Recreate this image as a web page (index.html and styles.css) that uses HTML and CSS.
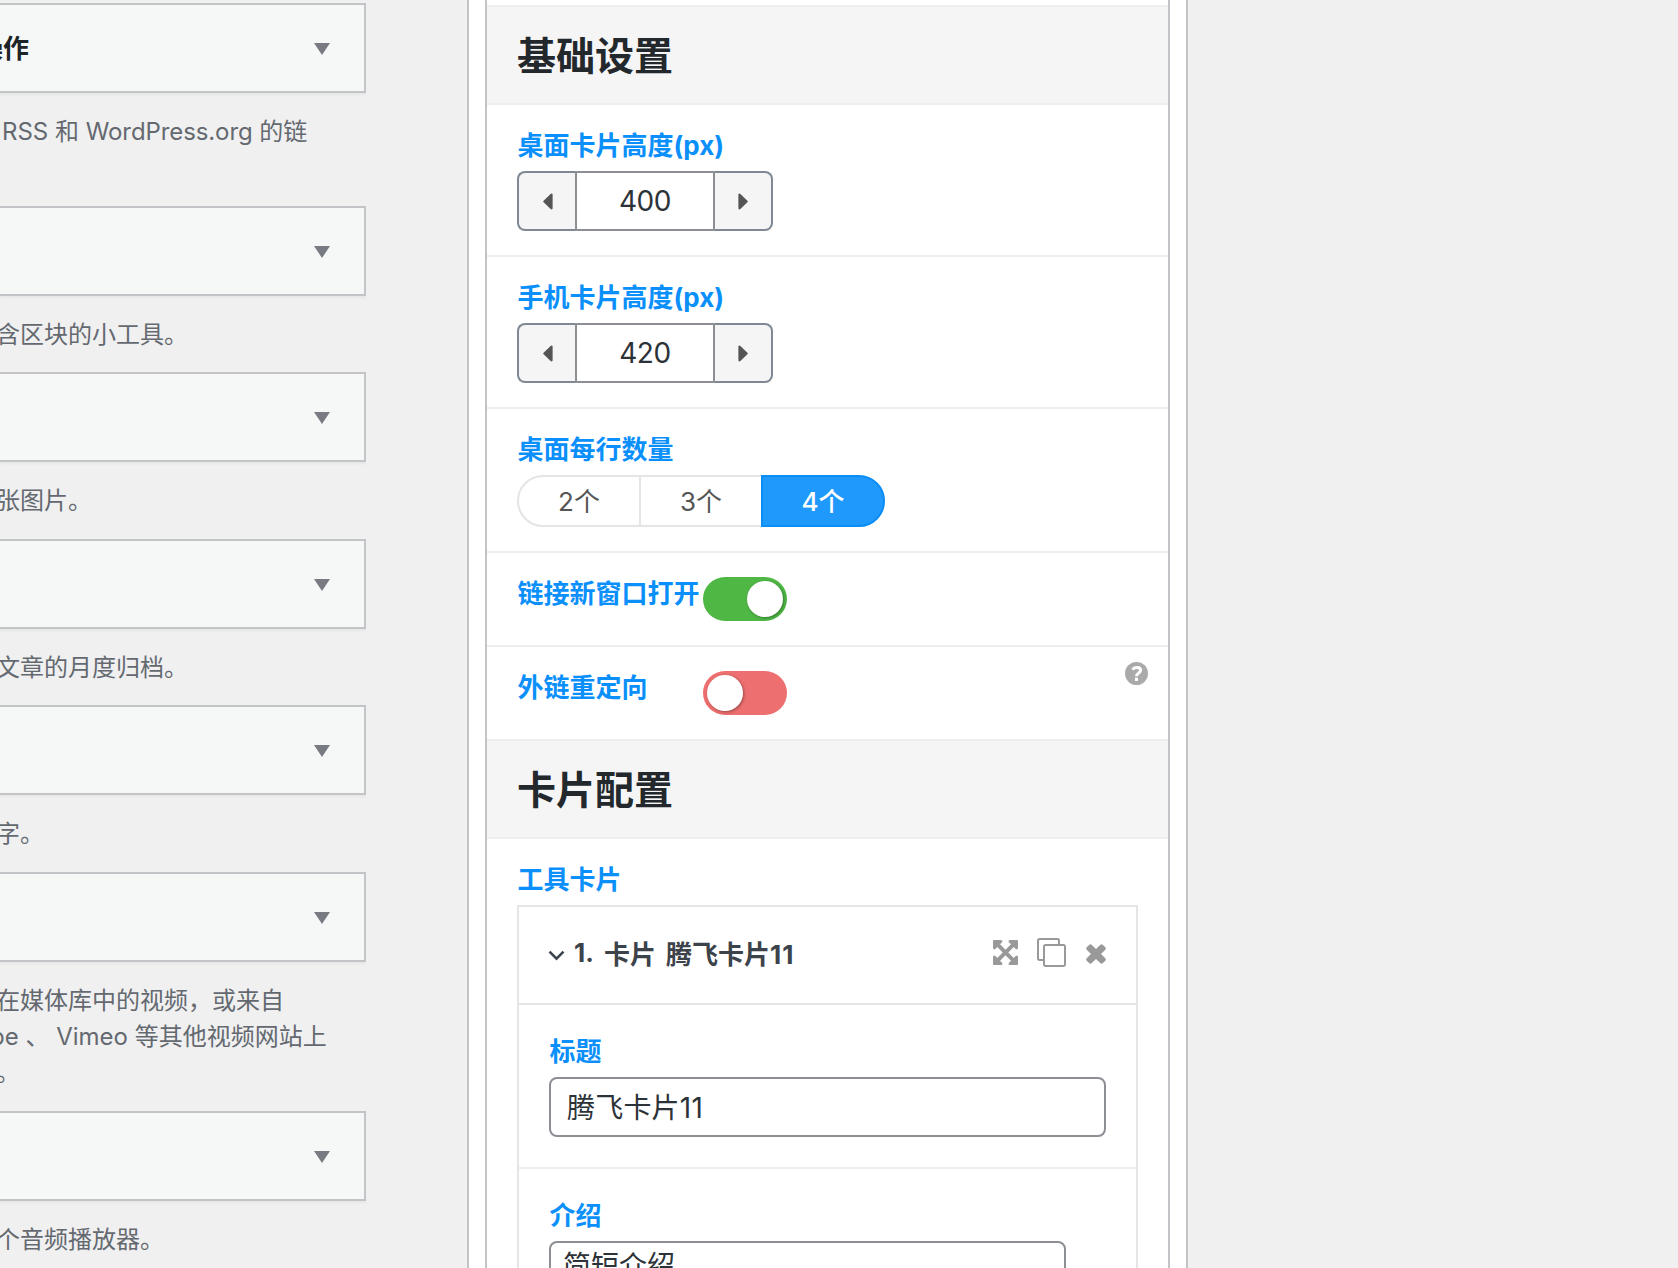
FILE: index.html
```html
<!DOCTYPE html>
<html lang="zh-CN">
<head>
  <meta charset="utf-8">
  <title>小工具</title>
  <link rel="stylesheet" href="styles.css">
</head>
<body>

<!-- available widgets -->
<div class="widgets">
  <div class="widget"><h3>操作</h3><i class="arrow"></i></div>
  <p class="desc rss">RSS 和 <span>WordPress.org</span> 的链<br>&nbsp;</p>
  <div class="widget"><i class="arrow"></i></div>
  <p class="desc">含区块的小工具。</p>
  <div class="widget"><i class="arrow"></i></div>
  <p class="desc">张图片。</p>
  <div class="widget"><i class="arrow"></i></div>
  <p class="desc">文章的月度归档。</p>
  <div class="widget"><i class="arrow"></i></div>
  <p class="desc">字。</p>
  <div class="widget"><i class="arrow"></i></div>
  <p class="desc">在媒体库中的视频，或来自<br><span class="tube">be 、 Vimeo 等其他视频网站上</span><br>。</p>
  <div class="widget"><i class="arrow"></i></div>
  <p class="desc">个音频播放器。</p>
</div>

<!-- settings of the opened widget -->
<div class="panel">
  <div class="fields">
    <h2 class="heading">基础设置</h2>

    <div class="field">
      <label>桌面卡片高度(px)</label>
      <div class="spinner">
        <button><svg width="10" height="17" viewBox="0 0 10 17"><path d="M9.6 1.6v13.8q-.6 1.6-2 .6L.6 9.3q-.8-.8 0-1.6L7.6 1q1.4-1 2 .6z"/></svg></button>
        <input type="text" value="400">
        <button><svg width="10" height="17" viewBox="0 0 10 17"><path d="M.4 1.6v13.8q.6 1.6 2 .6L9.4 9.3q.8-.8 0-1.6L2.4 1Q1 0 .4 1.6z"/></svg></button>
      </div>
    </div>

    <div class="field">
      <label>手机卡片高度(px)</label>
      <div class="spinner">
        <button><svg width="10" height="17" viewBox="0 0 10 17"><path d="M9.6 1.6v13.8q-.6 1.6-2 .6L.6 9.3q-.8-.8 0-1.6L7.6 1q1.4-1 2 .6z"/></svg></button>
        <input type="text" value="420">
        <button><svg width="10" height="17" viewBox="0 0 10 17"><path d="M.4 1.6v13.8q.6 1.6 2 .6L9.4 9.3q.8-.8 0-1.6L2.4 1Q1 0 .4 1.6z"/></svg></button>
      </div>
    </div>

    <div class="field">
      <label>桌面每行数量</label>
      <div class="buttons">
        <span>2个</span><span>3个</span><span class="active">4个</span>
      </div>
    </div>

    <div class="field inline">
      <label>链接新窗口打开</label>
      <div class="switch on"><i></i></div>
    </div>

    <div class="field inline">
      <label>外链重定向</label>
      <div class="switch"><i></i></div>
      <svg class="help" width="23" height="23" viewBox="0 0 69 69"><circle cx="34.5" cy="34.5" r="34.5" fill="#aaa"/><path d="M23 23C28 14 47 14 47 25C47 33 34.5 33 34.5 43" fill="none" stroke="#fff" stroke-width="9"/><path d="M30 47h9v10h-9z" fill="#fff"/></svg>
    </div>

    <h2 class="heading">卡片配置</h2>

    <div class="field">
      <label>工具卡片</label>
      <div class="group">
        <div class="group-title">
          <svg class="chevron" width="17" height="11" viewBox="0 0 17 11"><path d="M1.5 1.7l7 7 7-7" fill="none" stroke="#3c434a" stroke-width="2.6"/></svg>
          <span class="no">1.</span><span class="type">卡片</span><span class="name">腾飞卡片<b>11</b></span>
          <div class="tools">
            <svg width="25" height="25" viewBox="0 0 75 75" fill="#999"><path d="M14 14l47 47M61 14l-47 47" stroke="#999" stroke-width="12"/><path id="corner" d="M3 0H24q7 2 3 7L7 27q-5 4-7-3V3q0-3 3-3z"/><use href="#corner" transform="rotate(90 37.5 37.5)"/><use href="#corner" transform="rotate(180 37.5 37.5)"/><use href="#corner" transform="rotate(270 37.5 37.5)"/></svg>
            <svg width="29" height="29" viewBox="0 0 87 87" fill="#fff" stroke="#999" stroke-width="6"><rect x="3" y="3" width="63" height="63" rx="5"/><rect x="21" y="21" width="63" height="63" rx="5"/></svg>
            <svg class="close" width="20" height="20" viewBox="0 0 60 60" fill="#999"><rect x="-4" y="19.5" width="68" height="21" rx="6" transform="rotate(45 30 30)"/><rect x="-4" y="19.5" width="68" height="21" rx="6" transform="rotate(-45 30 30)"/></svg>
          </div>
        </div>
        <div class="subfield">
          <label>标题</label>
          <input type="text" class="text" value="腾飞卡片11">
        </div>
        <div class="subfield">
          <label>介绍</label>
          <textarea>简短介绍</textarea>
        </div>
      </div>
    </div>
  </div>
</div>

</body>
</html>
```

FILE: styles.css
```css
* {box-sizing: border-box;}
body {margin: 0; height: 1268px; overflow: hidden; display: flex; align-items: flex-start; background: #f0f0f0; color: #3c434a; font-family: Inter, "Noto Sans CJK SC", sans-serif; font-size: 26px;}
h2, h3, p {margin: 0;}
label {display: block; height: 34px; line-height: 34px; margin-bottom: 8px; padding-left: .5px; color: #0a8ffb; font-weight: bold; white-space: nowrap;}
button, input, textarea {font-family: inherit; margin: 0; outline: none;}

/* left column */
.widgets {width: 366px; padding-top: 3.2px; flex: none; overflow: hidden;}
.widget {display: flex; align-items: center; height: 90px; padding: 2px 34px 0 0; background: #f6f8f8; border: 2px solid #c3c4c7; border-left: 0; box-shadow: 0 2px 2px rgba(0,0,0,.04);}
.widget h3 {margin-left: -23px; font-size: 26px; line-height: 36px; color: #1d2327;}
.arrow {margin-left: auto; border: 8px solid transparent; border-top: 12px solid #787c82; border-bottom: 0;}
.desc {margin: 21px 0 19px -4px; font-size: 24px; line-height: 36.4px; color: #646970; white-space: nowrap;}
.rss {margin-left: 2px;}
.rss span {letter-spacing: -.1px;}
.tube {margin-left: -6px;}

/* widget form */
.panel {width: 721px; height: 1268px; margin-left: 101px; padding: 0 16px; flex: none; background: #fff; border: solid #c3c4c7; border-width: 0 2px; overflow: hidden;}
.fields {padding-top: 5px; border: solid #c3c4c7; border-width: 0 2px;}
.heading {height: 98px; padding-left: 30px; line-height: 98px; font-size: 39px; color: #23282d; background: #f5f5f5; border-bottom: 2px solid #eee;}
.heading:first-child {height: 100px; border-top: 2px solid #eee;}
.field {position: relative; padding: 24px 30px; border-bottom: 2px solid #eee;}
.inline {display: flex;}
.inline label {width: 186px; margin: 0;}

.spinner {display: flex; height: 60px;}
.spinner button {width: 58px; padding: 0; background: #f5f5f5; border: 2px solid #7e8993; display: flex; align-items: center; justify-content: center;}
.spinner button:first-child {padding-left: 2px; border-right: 0; border-radius: 8px 0 0 8px;}
.spinner button:last-child {border-left: 0; border-radius: 0 8px 8px 0;}
.spinner svg {fill: #555;}
.spinner input {width: 140px; padding: 0; border: 2px solid #8c8f94; text-align: center; font-size: 28px; letter-spacing: -.4px; color: #2c3338;}

.buttons {display: flex;}
.buttons span {width: 124px; height: 52px; line-height: 50px; border: 2px solid #e5e5e5; text-align: center; color: #555;}
.buttons span + span {margin-left: -2px;}
.buttons span:first-child {border-radius: 26px 0 0 26px;}
.buttons span:last-child {border-radius: 0 26px 26px 0;}
.buttons .active {background: #2099fc; border-color: #0a8df5; color: #fff; z-index: 1; font-weight: 500;}

.switch {width: 84px; height: 44px; padding: 4px; border-radius: 22px; background: #ed6f6f; display: flex;}
.switch i {width: 36px; height: 36px; border-radius: 50%; background: #fff; box-shadow: 1px 1px 3px rgba(0,0,0,.35);}
.switch.on {background: #4fb845; justify-content: flex-end;}
.help {position: absolute; top: 15px; right: 20px;}

.group {height: 420px; border: 2px solid #e5e5e5;}
.group-title {display: flex; align-items: center; height: 98px; padding: 0 30px 5px 29px; font-weight: bold; border-bottom: 2px solid #e5e5e5;}
.chevron {margin: 5px 9px 0 0;}
.no {width: 30px;}
.type {width: 62px;}
.name b {font-weight: bold; letter-spacing: 1px;}
.tools {display: flex; align-items: center; margin-left: auto; gap: 19px;}
.close {margin: 2px 0 0 1px;}
.subfield {padding: 30px; border-bottom: 2px solid #eee;}
.text {display: block; width: 100%; height: 60px; padding: 0 16px 2px; border: 2px solid #8c8f94; border-radius: 8px; font-size: 28px; letter-spacing: .2px; color: #2c3338;}
textarea {display: block; width: 517px; height: 200px; padding: 4px 12px; border: 2px solid #8c8f94; border-radius: 8px; font-size: 28px; line-height: 39.2px; color: #2c3338; resize: none;}
```
